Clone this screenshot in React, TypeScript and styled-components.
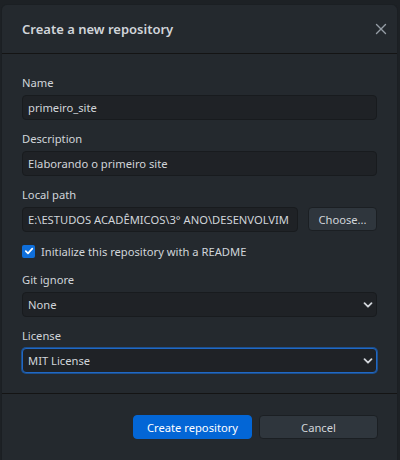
import React from "react";
import styled, { createGlobalStyle } from "styled-components";

const Global = createGlobalStyle`
  html, body { margin: 0; padding: 0; background: #1d2125; }
  body { font-family: "Noto Sans", "Open Sans", sans-serif; }
  * { box-sizing: border-box; }
`;

const Page = styled.div`
  width: 400px;
  height: 460px;
  padding: 4px 2px 0 1px;
  background: #1d2125;
  display: flex;
  overflow: hidden;
`;

const Dialog = styled.div`
  flex: 1;
  min-width: 0;
  background: #24292e;
  border-radius: 6px 6px 0 0;
  border: 1px solid #1b1f23;
  border-bottom: none;
  display: flex;
  flex-direction: column;
`;

const Header = styled.div`
  height: 49px;
  display: flex;
  align-items: center;
  justify-content: space-between;
  padding: 0 9px 0 20px;
  border-bottom: 1px solid #141414;
`;

const Title = styled.h1`
  margin: 0;
  font-size: 13px;
  font-weight: 600;
  color: #d1d5da;
`;

const Close = styled.button`
  background: none;
  border: none;
  padding: 0;
  width: 14px;
  height: 14px;
  display: flex;
  color: #959da5;
`;

const Body = styled.div`
  padding: 21px 20px 20px 20px;
  display: flex;
  flex-direction: column;
  min-width: 0;
  border-bottom: 1px solid #141414;
`;

const Label = styled.label`
  display: block;
  font-size: 11.2px;
  color: #d1d5da;
  line-height: 16px;
  margin-bottom: 4px;
`;

const Field = styled.div`
  margin-bottom: 11px;
  min-width: 0;
  &:last-child { margin-bottom: 0; }
`;

const Input = styled.div<{ $focus?: boolean }>`
  height: 25px;
  border-radius: 4px;
  background: #1f2226;
  border: 1px solid ${(p) => (p.$focus ? "#2168c4" : "#181b1e")};
  box-shadow: ${(p) => (p.$focus ? "0 0 0 1px #1b4f8e" : "none")};
  display: flex;
  align-items: center;
  padding: 0 3px 0 5px;
  font-size: 11.2px;
  color: #d1d5da;
  flex: 1;
  min-width: 0;
  justify-content: space-between;
`;

const Value = styled.span`
  white-space: nowrap;
  overflow: hidden;
  min-width: 0;
`;

const Row = styled.div`
  display: flex;
  gap: 10px;
  min-width: 0;
`;

const Button = styled.button<{ $primary?: boolean }>`
  height: 24px;
  border-radius: 4px;
  font-family: inherit;
  font-size: 11.2px;
  padding: 0 10px;
  flex-shrink: 0;
  white-space: nowrap;
  color: ${(p) => (p.$primary ? "#ffffff" : "#d1d5da")};
  background: ${(p) => (p.$primary ? "#0366d6" : "#2f363d")};
  border: 1px solid ${(p) => (p.$primary ? "#0366d6" : "#1b1f23")};
`;

const ChooseButton = styled(Button)`
  width: 69px;
  padding: 0;
`;

const CheckRow = styled.div`
  display: flex;
  align-items: center;
  gap: 6px;
  height: 16px;
  margin: 0 0 13px 0;
  font-size: 11.2px;
  color: #d1d5da;
`;

const Box = styled.span`
  width: 13px;
  height: 13px;
  border-radius: 2px;
  background: #0f6fdb;
  display: flex;
  align-items: center;
  justify-content: center;
`;

const Footer = styled.div`
  flex: 1;
  display: flex;
  justify-content: flex-end;
  gap: 7px;
  padding: 21px 19px 0 0;
`;

const FooterButton = styled(Button)`
  width: 119px;
`;

const Chevron = () => (
  <svg width="10" height="10" viewBox="0 0 10 10">
    <path d="M1.5 3.2 L5 6.7 L8.5 3.2" fill="none" stroke="#d1d5da" strokeWidth="1.8" strokeLinecap="round" strokeLinejoin="round" />
  </svg>
);

export default function App() {
  return (
    <>
      <Global />
      <Page>
        <Dialog>
          <Header>
            <Title>Create a new repository</Title>
            <Close aria-label="Close">
              <svg width="14" height="14" viewBox="0 0 14 14">
                <path d="M2.5 2.5 L11.5 11.5 M11.5 2.5 L2.5 11.5" stroke="#959da5" strokeWidth="1.4" strokeLinecap="round" />
              </svg>
            </Close>
          </Header>
          <Body>
            <Field>
              <Label>Name</Label>
              <Input><Value>primeiro_site</Value></Input>
            </Field>
            <Field>
              <Label>Description</Label>
              <Input><Value>Elaborando o primeiro site</Value></Input>
            </Field>
            <Field>
              <Label>Local path</Label>
              <Row>
                <Input><Value>E:\ESTUDOS ACADÊMICOS\3° ANO\DESENVOLVIM</Value></Input>
                <ChooseButton>Choose...</ChooseButton>
              </Row>
            </Field>
            <CheckRow>
              <Box>
                <svg width="10" height="10" viewBox="0 0 10 10">
                  <path d="M1.8 5.2 L4 7.4 L8.3 2.6" fill="none" stroke="#fff" strokeWidth="1.7" strokeLinecap="round" strokeLinejoin="round" />
                </svg>
              </Box>
              Initialize this repository with a README
            </CheckRow>
            <Field>
              <Label>Git ignore</Label>
              <Input>
                <Value>None</Value>
                <Chevron />
              </Input>
            </Field>
            <Field>
              <Label>License</Label>
              <Input $focus>
                <Value>MIT License</Value>
                <Chevron />
              </Input>
            </Field>
          </Body>
          <Footer>
            <FooterButton $primary>Create repository</FooterButton>
            <FooterButton>Cancel</FooterButton>
          </Footer>
        </Dialog>
      </Page>
    </>
  );
}
